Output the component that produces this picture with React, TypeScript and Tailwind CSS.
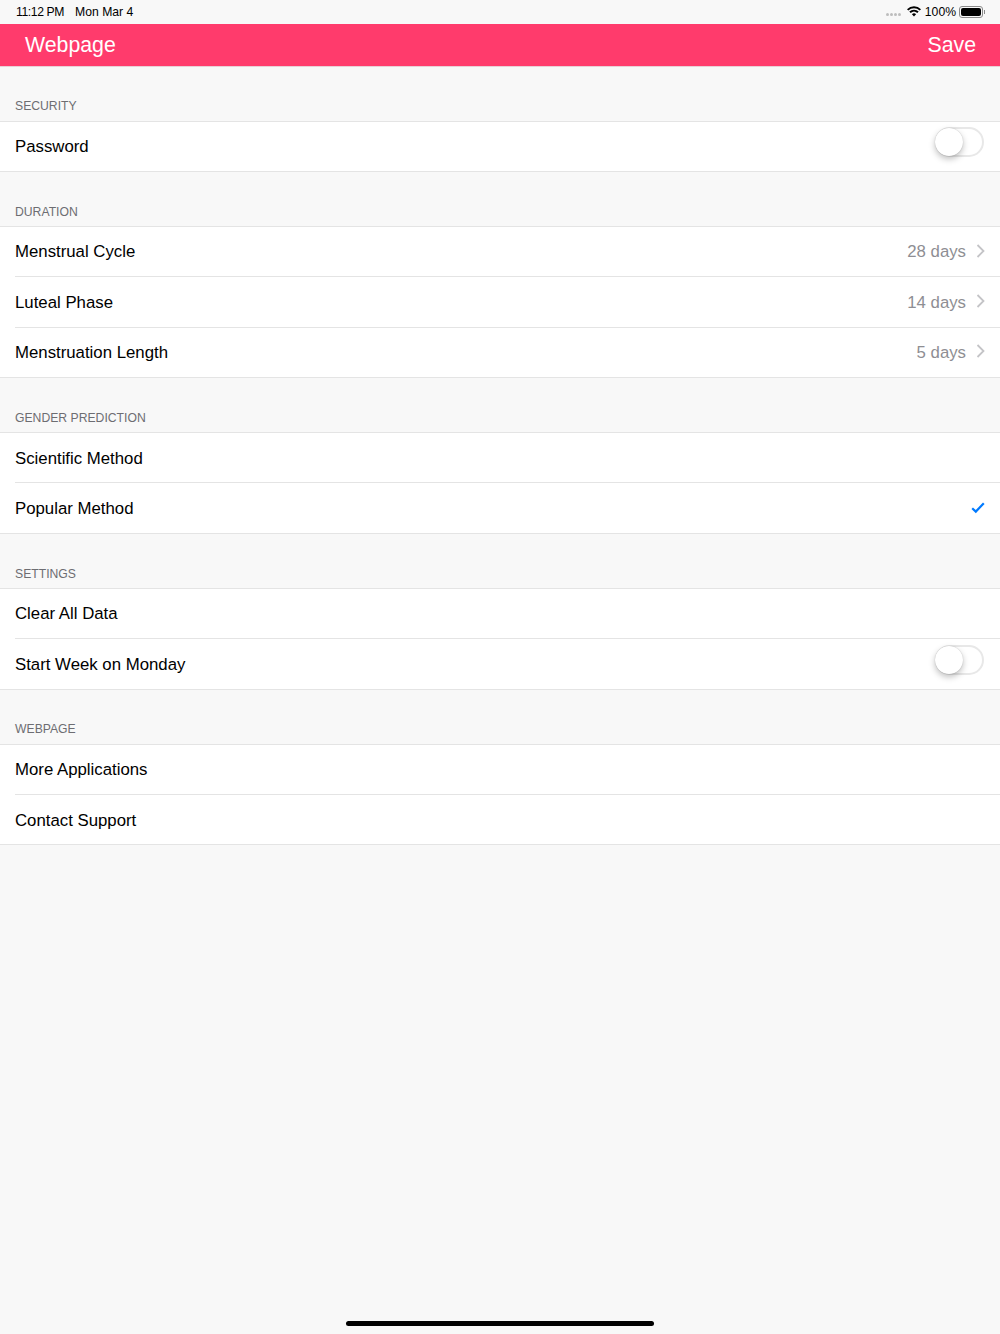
const sections = [
  { title: 'SECURITY', rows: [{ label: 'Password', toggle: true }] },
  {
    title: 'DURATION',
    rows: [
      { label: 'Menstrual Cycle', value: '28 days' },
      { label: 'Luteal Phase', value: '14 days' },
      { label: 'Menstruation Length', value: '5 days' },
    ],
  },
  {
    title: 'GENDER PREDICTION',
    rows: [{ label: 'Scientific Method' }, { label: 'Popular Method', check: true }],
  },
  {
    title: 'SETTINGS',
    rows: [{ label: 'Clear All Data' }, { label: 'Start Week on Monday', toggle: true }],
  },
  {
    title: 'WEBPAGE',
    rows: [{ label: 'More Applications' }, { label: 'Contact Support' }],
  },
];

type RowData = { label: string; value?: string; toggle?: boolean; check?: boolean };

function StatusBar() {
  return (
    <div className="h-6 flex items-center justify-between pl-4 pr-[15px] text-[12.2px] text-black bg-[#f8f8f8]">
      <div className="flex gap-[11px]">
        <span className="tracking-[-0.4px]">11:12 PM</span>
        <span>Mon Mar 4</span>
      </div>
      <div className="flex items-center">
        <div className="flex gap-[1px] mr-[6px] mt-[6px]">
          {[0, 1, 2, 3].map(i => (
            <span key={i} className="w-[3px] h-[3px] rounded-full bg-[#bdbdbd]" />
          ))}
        </div>
        <svg width="14" height="11" viewBox="0 0 14 11" className="mr-[4px] mb-[1px]">
          <path d="M7 10.6 4.9 8.3a3 3 0 0 1 4.2 0z" fill="#000" />
          <path d="M3.7 7.1 2.3 5.6a6.8 6.8 0 0 1 9.4 0l-1.4 1.5a4.8 4.8 0 0 0-6.6 0z" fill="#000" />
          <path d="M1.3 4.6 0 3.2a10 10 0 0 1 14 0l-1.3 1.4a8.2 8.2 0 0 0-11.4 0z" fill="#000" />
        </svg>
        <span className="mr-[3px]">100%</span>
        <div className="w-[24px] h-[12px] rounded-[3px] border border-[#8a8a8a] p-[1px]">
          <div className="w-full h-full rounded-[2px] bg-black" />
        </div>
        <div className="w-[1px] h-[4px] bg-[#8a8a8a] ml-[1px]" />
      </div>
    </div>
  );
}

function Toggle() {
  return (
    <div className="relative w-[49px] h-[30px] rounded-full border-2 border-[#e8e8e8] bg-white -mt-[9px] mr-[1px]">
      <div className="absolute -left-[2px] -top-[1px] w-[28px] h-[28px] rounded-full bg-white shadow-[0_3px_6px_rgba(0,0,0,0.25),0_0_1px_rgba(0,0,0,0.25)]" />
    </div>
  );
}

function Row({ row, last }: { row: RowData; last: boolean }) {
  return (
    <div className="relative h-[50.4px] flex items-center justify-between px-[15px]">
      <span className="text-[16.8px] text-black">{row.label}</span>
      {row.value && (
        <div className="flex items-center gap-[10px]">
          <span className="text-[16.8px] text-[#8e8e93]">{row.value}</span>
          <svg width="9" height="14" viewBox="0 0 9 14" className="-mt-[3px]" fill="none">
            <path d="M1.5 1 7.5 7l-6 6" stroke="#c4c4c7" strokeWidth="1.8" />
          </svg>
        </div>
      )}
      {row.toggle && <Toggle />}
      {row.check && (
        <svg width="14" height="12" viewBox="0 0 14 12" fill="none" className="-mt-[1px]">
          <path d="M1.2 6.2 4.8 9.6 12.8 1.2" stroke="#007aff" strokeWidth="2.2" />
        </svg>
      )}
      <div className={last ? 'absolute left-0 right-0 bottom-0 h-px bg-[#e4e4e4]' : 'absolute left-[15px] right-0 bottom-0 h-px bg-[#e4e4e4]'} />
    </div>
  );
}

export default function App() {
  return (
    <div className="relative min-h-[1334px] bg-[#f8f8f8] font-['Liberation_Sans',sans-serif]">
      <StatusBar />
      <div className="h-[42.5px] flex items-center justify-between pl-[25px] pr-[24px] pt-[2px] bg-[#ff3b6c] text-white text-[21.3px] border-b border-[#e8d0d6]">
        <span>Webpage</span>
        <span>Save</span>
      </div>
      {sections.map(section => (
        <div key={section.title}>
          <div className="h-[54px] flex items-end pl-[15px] pb-[5px] text-[12.2px] text-[#6d6d72]">
            {section.title}
          </div>
          <div className="bg-white border-t border-[#e4e4e4]">
            {section.rows.map((row, i) => (
              <Row key={row.label} row={row} last={i === section.rows.length - 1} />
            ))}
          </div>
        </div>
      ))}
      <div className="absolute left-[346px] bottom-[8px] w-[308px] h-[5px] rounded-full bg-black" />
    </div>
  );
}
